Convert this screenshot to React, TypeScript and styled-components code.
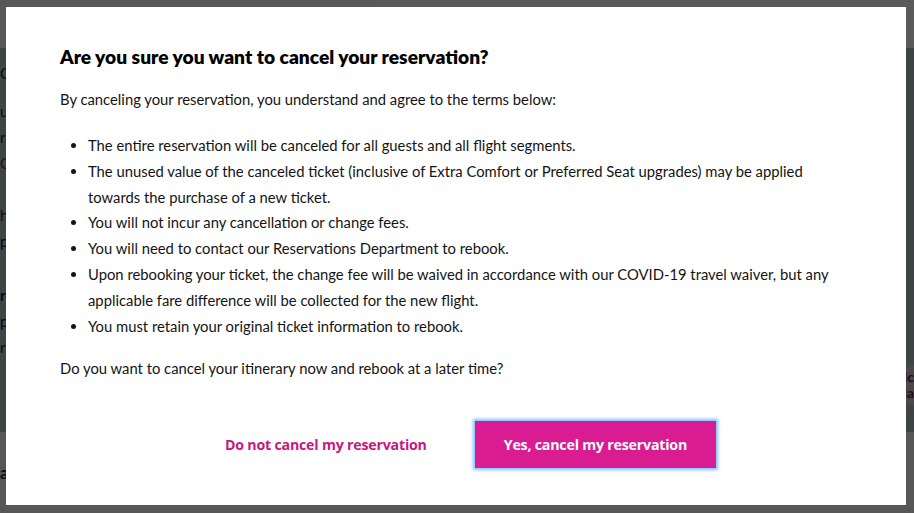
import React from "react";
import styled, { createGlobalStyle } from "styled-components";

const GlobalStyle = createGlobalStyle`
  html, body {
    margin: 0;
    padding: 0;
    width: 914px;
    height: 513px;
    overflow: hidden;
  }
  body {
    font-family: Lato, "Noto Sans", Arial, sans-serif;
    color: #111;
  }
`;

const Page = styled.div`
  position: relative;
  width: 914px;
  height: 513px;
  display: flex;
  flex-direction: column;
  background: #fff;
`;

const Header = styled.div`
  height: 48px;
  background: linear-gradient(90deg, #f2f2f2, #f8f8f8);
`;

const Content = styled.div`
  height: 384px;
  background: #aebfc6;
  display: flex;
  justify-content: space-between;
`;

const EdgeColumn = styled.div<{ $top: number }>`
  display: flex;
  flex-direction: column;
  padding-top: ${(p) => p.$top}px;
  font-size: 15px;
  line-height: 26px;
`;

const Gap = styled.div<{ $h: number }>`
  height: ${(p) => p.$h}px;
`;

const SideCard = styled.div`
  height: 40px;
  width: 60px;
  margin-top: 317px;
  background: #c9c9c9;
  display: flex;
  flex-direction: column;
  justify-content: center;
  align-items: flex-end;
  font-weight: 700;
  font-size: 14px;
  line-height: 16px;
`;

const Footer = styled.div`
  flex: 1;
  background: #f0f0f0;
  display: flex;
  align-items: center;
  font-weight: 700;
  font-size: 17px;
`;

const EdgeText = styled.span<{ $color?: string; $bold?: boolean }>`
  color: ${(p) => p.$color || "#222"};
  font-weight: ${(p) => (p.$bold ? 700 : 400)};
  white-space: nowrap;
`;

const Overlay = styled.div`
  position: absolute;
  inset: 0;
  background: rgba(0, 0, 0, 0.64);
  display: flex;
  padding: 7px 8px 8px 6px;
  box-sizing: border-box;
`;

const Modal = styled.div`
  flex: 1;
  background: #fff;
  padding: 37px 54px 0 54px;
  display: flex;
  flex-direction: column;
`;

const Title = styled.h2`
  margin: 0 0 16px;
  font-family: Lato, sans-serif;
  font-weight: 800;
  font-size: 19.2px;
  line-height: 26px;
  color: #000;
`;

const Text = styled.p`
  margin: 0;
  font-size: 14.8px;
  line-height: 26px;
  color: #141414;
`;

const List = styled.ul`
  margin: 21px 0 16px;
  padding-left: 28px;
  font-size: 14.8px;
  line-height: 25.8px;
  color: #141414;
`;

const Actions = styled.div`
  display: flex;
  justify-content: center;
  gap: 19px;
  margin-top: 40px;
`;

const Button = styled.button<{ $primary?: boolean }>`
  height: 47px;
  padding: 0 29px;
  border: none;
  font-family: "Open Sans", Lato, sans-serif;
  font-weight: 700;
  font-size: 14.2px;
  letter-spacing: -0.2px;
  cursor: pointer;
  background: ${(p) => (p.$primary ? "#d91c91" : "transparent")};
  color: ${(p) => (p.$primary ? "#fff" : "#c8177f")};
  box-shadow: ${(p) =>
    p.$primary ? "0 0 3px 2px rgba(90, 170, 255, 0.75)" : "none"};
`;

export default function App() {
  return (
    <Page>
      <GlobalStyle />
      <Header />
      <Content>
        <EdgeColumn $top={12}>
          <EdgeText>C</EdgeText>
          <Gap $h={12} />
          <EdgeText>u</EdgeText>
          <EdgeText>r</EdgeText>
          <EdgeText $color="#8a1258">O</EdgeText>
          <Gap $h={26} />
          <EdgeText>h</EdgeText>
          <EdgeText>p</EdgeText>
          <Gap $h={28} />
          <EdgeText $bold>r</EdgeText>
          <EdgeText>p</EdgeText>
          <EdgeText>r</EdgeText>
        </EdgeColumn>
        <SideCard>
          <EdgeText $bold $color="#7a1050">lc</EdgeText>
          <EdgeText $bold $color="#7a1050">la</EdgeText>
        </SideCard>
      </Content>
      <Footer>
        <EdgeText $bold>a</EdgeText>
      </Footer>
      <Overlay>
        <Modal role="dialog">
          <Title>Are you sure you want to cancel your reservation?</Title>
          <Text>
            By canceling your reservation, you understand and agree to the
            terms below:
          </Text>
          <List>
            <li>
              The entire reservation will be canceled for all guests and all
              flight segments.
            </li>
            <li>
              The unused value of the canceled ticket (inclusive of Extra
              Comfort or Preferred Seat upgrades) may be applied towards the
              purchase of a new ticket.
            </li>
            <li>You will not incur any cancellation or change fees.</li>
            <li>
              You will need to contact our Reservations Department to rebook.
            </li>
            <li>
              Upon rebooking your ticket, the change fee will be waived in
              accordance with our COVID-19 travel waiver, but any applicable
              fare difference will be collected for the new flight.
            </li>
            <li>You must retain your original ticket information to rebook.</li>
          </List>
          <Text>
            Do you want to cancel your itinerary now and rebook at a later
            time?
          </Text>
          <Actions>
            <Button>Do not cancel my reservation</Button>
            <Button $primary>Yes, cancel my reservation</Button>
          </Actions>
        </Modal>
      </Overlay>
    </Page>
  );
}
